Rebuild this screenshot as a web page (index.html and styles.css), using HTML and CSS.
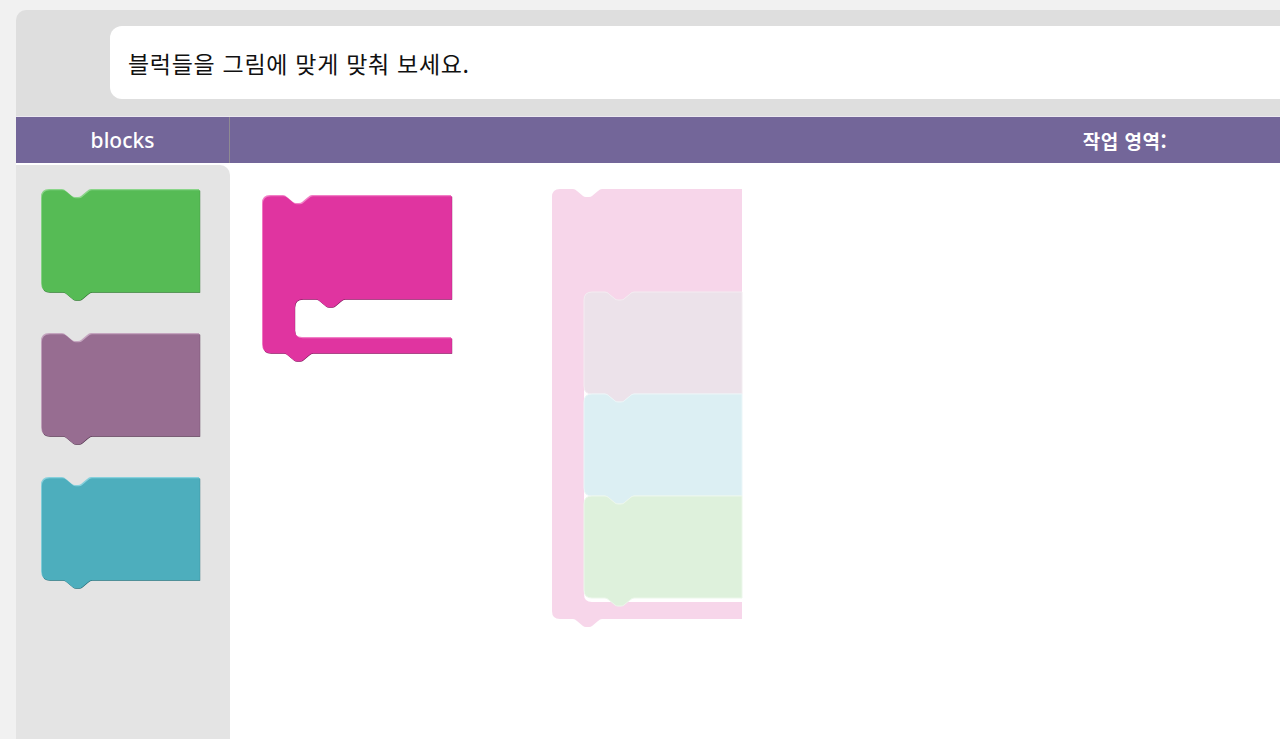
FILE: index.html
```html
<!DOCTYPE html>
<html lang="ko">
<head>
<meta charset="utf-8">
<title>Blocks</title>
<link rel="stylesheet" href="styles.css">
</head>
<body>
<svg class="defs" width="0" height="0" aria-hidden="true">
  <defs>
    <path id="stmt" d="M0,8 Q0,0 8,0 L21,0 Q23,0 25,2 L31,7 Q32,8 34,8 L37,8 Q39,8 40,7 L46,2 Q48,0 50,0 L158,0 L158,102 L50,102 Q48,102 46,104 L40,109 Q39,110 37,110 L34,110 Q32,110 31,109 L25,104 Q23,102 21,102 L8,102 Q0,102 0,94 Z"/>
    <path id="cblock" d="M0,8 Q0,0 8,0 L21,0 Q23,0 25,2 L31,7 Q32,8 34,8 L37,8 Q39,8 40,7 L46,2 Q48,0 50,0 L189,0 L189,103 L82,103 Q80,103 78,105 L72,110 Q71,111 69,111 L66,111 Q64,111 63,110 L57,105 Q55,103 53,103 L40,103 Q32,103 32,111 L32,134 Q32,142 40,142 L189,142 L189,157 L50,157 Q48,157 46,159 L40,164 Q39,165 37,165 L34,165 Q32,165 31,164 L25,159 Q23,157 21,157 L8,157 Q0,157 0,149 Z"/>
    <path id="cghost" d="M0,8 Q0,0 8,0 L21,0 Q23,0 25,2 L31,7 Q32,8 34,8 L37,8 Q39,8 40,7 L46,2 Q48,0 50,0 L190,0 L190,103 L82,103 Q80,103 78,105 L72,110 Q71,111 69,111 L66,111 Q64,111 63,110 L57,105 Q55,103 53,103 L40,103 Q32,103 32,111 L32,405 Q32,413 40,413 L190,413 L190,430 L50,430 Q48,430 46,432 L40,437 Q39,438 37,438 L34,438 Q32,438 31,437 L25,432 Q23,430 21,430 L8,430 Q0,430 0,422 Z"/>
  </defs>
</svg>
<div class="app">
  <div class="top">
    <div class="prompt">블럭들을 그림에 맞게 맞춰 보세요.</div>
  </div>
  <div class="bar">
    <div class="bar-blocks">blocks</div>
    <div class="bar-work">작업 영역:</div>
  </div>
  <div class="main">
    <div class="palette">
      <svg class="pblock" width="164" height="112" viewBox="0 0 164 112">
        <use href="#stmt" fill="#2e6d2e" transform="translate(1.2,1.8)"/>
        <use href="#stmt" fill="#8ad589"/>
        <use href="#stmt" fill="#56bb55" transform="translate(0.9,1.2)"/>
      </svg>
      <svg class="pblock" width="164" height="112" viewBox="0 0 164 112">
        <use href="#stmt" fill="#4a2c46" transform="translate(1.2,1.8)"/>
        <use href="#stmt" fill="#c4a5bf"/>
        <use href="#stmt" fill="#976d91" transform="translate(0.9,1.2)"/>
      </svg>
      <svg class="pblock" width="164" height="112" viewBox="0 0 164 112">
        <use href="#stmt" fill="#1f6570" transform="translate(1.2,1.8)"/>
        <use href="#stmt" fill="#86d0dc"/>
        <use href="#stmt" fill="#4daebd" transform="translate(0.9,1.2)"/>
      </svg>
    </div>
    <div class="workspace">
      <svg class="canvas" width="700" height="520" viewBox="0 0 700 520">
        <g transform="translate(32,32)">
          <use href="#cblock" fill="#7a1558" transform="translate(1.2,1.8)"/>
          <use href="#cblock" fill="#f27fc6"/>
          <use href="#cblock" fill="#e034a0" transform="translate(0.9,1.2)"/>
        </g>
        <g transform="translate(322,26)">
          <use href="#cghost" fill="#f7d6ea"/>
          <g transform="translate(32,103)">
            <use href="#stmt" fill="#ece2ea" stroke="#f3ecf1" stroke-width="1"/>
          </g>
          <g transform="translate(32,205)">
            <use href="#stmt" fill="#dceff3" stroke="#ebf6f8" stroke-width="1"/>
          </g>
          <g transform="translate(32,307)">
            <use href="#stmt" fill="#def1dc" stroke="#ecf7eb" stroke-width="1"/>
          </g>
        </g>
      </svg>
    </div>
  </div>
</div>
</body>
</html>
```

FILE: styles.css
```css
html, body {
  margin: 0;
  padding: 0;
  height: 100%;
  overflow: hidden;
  background: #f1f1f1;
}

.defs {
  position: absolute;
  width: 0;
  height: 0;
}

.app {
  margin: 10px 0 0 16px;
  width: 2004px;
  height: 729px;
  background: #dedede;
  border-top-left-radius: 10px;
  display: flex;
  flex-direction: column;
  font-family: "Noto Sans", "Noto Sans CJK KR", sans-serif;
}

.top {
  height: 106px;
  box-sizing: border-box;
  padding: 16px 0 0 94px;
}

.prompt {
  height: 73px;
  background: #ffffff;
  border-radius: 12px;
  display: flex;
  align-items: center;
  padding-left: 18px;
  font-family: "Noto Sans CJK KR", sans-serif;
  font-size: 23px;
  color: #111111;
  letter-spacing: 0.7px;
}

.bar {
  height: 46px;
  background: #736699;
  border-top: 1px solid #ebe8f0;
  display: flex;
  color: #ffffff;
}

.bar-blocks {
  width: 214px;
  box-sizing: border-box;
  border-right: 1px solid #8e8a93;
  display: flex;
  align-items: center;
  justify-content: center;
  font-family: "Noto Sans", sans-serif;
  font-size: 21px;
  font-weight: 500;
}

.bar-work {
  flex: 1;
  display: flex;
  align-items: center;
  justify-content: center;
  font-family: "Noto Sans CJK KR", sans-serif;
  font-size: 19px;
  font-weight: 700;
  letter-spacing: 0.5px;
}

.main {
  flex: 1;
  background: #ffffff;
  display: flex;
  padding-top: 2px;
}

.palette {
  width: 214px;
  background: #e4e4e4;
  border-top-right-radius: 10px;
  box-sizing: border-box;
  padding: 24px 0 0 25px;
  display: flex;
  flex-direction: column;
  gap: 32px;
}

.pblock {
  display: block;
}

.workspace {
  flex: 1;
  margin-top: -2px;
}

.canvas {
  display: block;
}
```
